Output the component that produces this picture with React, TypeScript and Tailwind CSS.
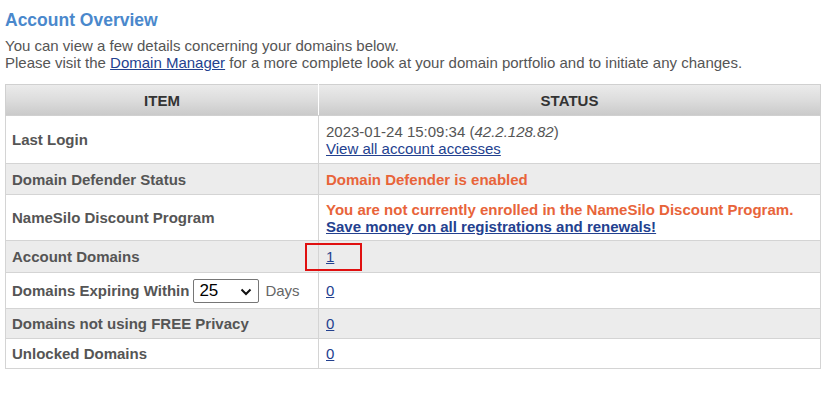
import React from "react";

function Link({ children, bold }: { children: React.ReactNode; bold?: boolean }) {
  return (
    <a href="#" className={`text-[#23418f] underline ${bold ? "font-bold" : ""}`}>
      {children}
    </a>
  );
}

export default function App() {
  const cellL = "border border-[#d4d4d4] pl-[6px] pr-2 py-0 font-bold text-[#555]";
  const cellR = "border border-[#d4d4d4] pl-[7px] pr-2 py-0 text-[#555]";

  return (
    <div className="w-[831px] h-[393px] bg-white px-[5px] pt-[9px] font-['Liberation_Sans',Arial,sans-serif] text-[15px] leading-[17px]">
      <h1 className="text-[17.5px] leading-[22px] font-bold text-[#4a88cc]">Account Overview</h1>
      <p className="mt-[6px] text-[#555]">
        You can view a few details concerning your domains below.
        <br />
        Please visit the <Link>Domain Manager</Link> for a more complete look at your domain portfolio and to initiate any changes.
      </p>

      <table className="mt-[13px] w-[816px] border-collapse leading-[17px]">
        <thead>
          <tr className="bg-gradient-to-b from-[#ebebeb] via-[#dcdcdc] to-[#c9c9c9]">
            <th className="w-[313px] border border-[#d0d0d0] border-r-white h-[31px] text-[15px] font-bold text-[#333]">ITEM</th>
            <th className="border border-[#d0d0d0] border-l-white h-[31px] text-[15px] font-bold text-[#333]">STATUS</th>
          </tr>
        </thead>
        <tbody>
          <tr className="bg-white h-[48px]">
            <td className={cellL}>Last Login</td>
            <td className={cellR}>
              2023-01-24 15:09:34 (<i>42.2.128.82</i>)
              <br />
              <Link>View all account accesses</Link>
            </td>
          </tr>
          <tr className="bg-[#ececec] h-[31px]">
            <td className={cellL}>Domain Defender Status</td>
            <td className={`${cellR} font-bold !text-[#e8643a]`}>Domain Defender is enabled</td>
          </tr>
          <tr className="bg-white h-[46px]">
            <td className={cellL}>NameSilo Discount Program</td>
            <td className={`${cellR} font-bold !text-[#e8643a]`}>
              You are not currently enrolled in the NameSilo Discount Program.
              <br />
              <Link bold>Save money on all registrations and renewals!</Link>
            </td>
          </tr>
          <tr className="bg-[#ececec] h-[32px]">
            <td className={cellL}>Account Domains</td>
            <td className={`${cellR} relative`}>
              <Link>1</Link>
              <span className="absolute left-[-14px] top-[2px] w-[57px] h-[28px] border-2 border-[#e01010]" />
            </td>
          </tr>
          <tr className="bg-white h-[36px]">
            <td className={cellL}>
              <div className="flex items-center">
                <span>Domains Expiring Within</span>
                <div className="ml-[4px] relative w-[66px] h-[24px] border border-[#767676] rounded-[2px] bg-white flex items-center pl-[5px] text-[17px] font-normal text-black">
                  25
                  <svg className="absolute right-[6px] top-[8px]" width="12" height="8" viewBox="0 0 12 8">
                    <path d="M1.5 1.5 L6 6 L10.5 1.5" fill="none" stroke="#111" strokeWidth="2" />
                  </svg>
                </div>
                <span className="ml-[6px] font-normal text-[#666]">Days</span>
              </div>
            </td>
            <td className={cellR}>
              <Link>0</Link>
            </td>
          </tr>
          <tr className="bg-[#ececec] h-[30px]">
            <td className={cellL}>Domains not using FREE Privacy</td>
            <td className={cellR}>
              <Link>0</Link>
            </td>
          </tr>
          <tr className="bg-white h-[30px]">
            <td className={cellL}>Unlocked Domains</td>
            <td className={cellR}>
              <Link>0</Link>
            </td>
          </tr>
        </tbody>
      </table>
    </div>
  );
}
